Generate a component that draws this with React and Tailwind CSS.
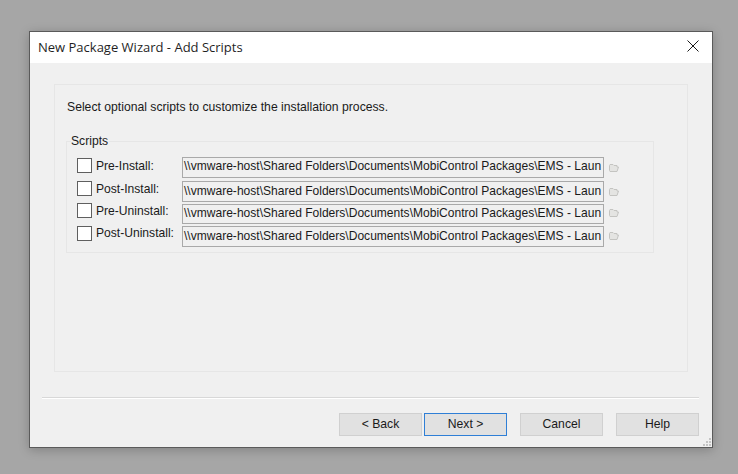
import React from 'react';

const PATH = '\\\\vmware-host\\Shared Folders\\Documents\\MobiControl Packages\\EMS - Laun';

const rows = [
    { label: 'Pre-Install:', rowClass: 'h-[21px] mb-[3px]', boxClass: 'mt-px', labelClass: 'mt-[2px]', iconClass: 'mt-[7px]', pathClass: 'leading-[16px]' },
    { label: 'Post-Install:', rowClass: 'h-[21px] mb-[2px]', boxClass: 'mt-0', labelClass: 'mt-px', iconClass: 'mt-[7px]', pathClass: 'leading-[18px]' },
    { label: 'Pre-Uninstall:', rowClass: 'h-[20px] mb-[2px]', boxClass: '-mt-px', labelClass: 'mt-0', iconClass: 'mt-[5px]', pathClass: 'leading-[16px]' },
    { label: 'Post-Uninstall:', rowClass: 'h-[21px]', boxClass: 'mt-0', labelClass: 'mt-0', iconClass: 'mt-[6px]', pathClass: 'leading-[18px]' },
];

const FolderIcon = ({ className }) => (
    <svg width="10" height="8" viewBox="0 0 10 8" className={`ml-[5px] shrink-0 ${className}`}>
        <path d="M0.5 1.5 L1 0.5 H4 L5 1.5 H8 V3 H9.5 L8 7.5 H1 L0.5 6.5 Z" fill="#e4e4e2" stroke="#c4c4c1" strokeWidth="1" />
    </svg>
);

const WizardButton = ({ children, focused, className = '' }) => (
    <button className={`h-[23px] w-[83px] bg-[#e1e1e1] text-[12.2px] text-[#1a1a1a] ${focused ? 'border border-[#2f7fd6]' : 'border border-[#d0d0d0]'} ${className}`}>
        {children}
    </button>
);

const App = () => {
    return (
        <div className="h-[474px] w-[738px] overflow-hidden bg-[#a6a6a6] pl-[29px] pt-[31px] font-['Liberation_Sans',Arial,sans-serif]">
            <div className="relative flex h-[417px] w-[684px] flex-col border border-[#5a5a5a] bg-[#f0f0f0] shadow-[0_2px_10px_rgba(0,0,0,0.22)]">
                <div className="flex h-[31px] items-center justify-between bg-white pl-2 pr-[13px]">
                    <span className="font-['Open_Sans',sans-serif] text-[13px] text-[#1f1f1f]">New Package Wizard - Add Scripts</span>
                    <svg width="12" height="12" viewBox="0 0 12 12" className="mb-[3px]">
                        <path d="M0.5 0.5 L11.5 11.5 M11.5 0.5 L0.5 11.5" stroke="#1a1a1a" strokeWidth="1" fill="none" />
                    </svg>
                </div>

                <div className="ml-[24px] mt-[21px] h-[288px] w-[634px] border border-[#e6e6e6] pl-[12px] pt-[15px]">
                    <p className="text-[12.2px] leading-[15px] text-[#1a1a1a]">Select optional scripts to customize the installation process.</p>

                    <div className="relative ml-[-1px] mt-[26px] h-[112px] w-[588px] border border-[#e6e6e6] pl-[10px] pt-[15px]">
                        <span className="absolute left-[4px] top-[-8px] bg-[#f0f0f0] pr-px text-[12.15px] leading-[15px] text-[#1a1a1a]">Scripts</span>
                        {rows.map((row) => (
                            <div key={row.label} className={`flex ${row.rowClass}`}>
                                <div className={`h-[15px] w-[15px] shrink-0 border border-[#5f5f5f] bg-white ${row.boxClass}`} />
                                <span className={`ml-[4px] w-[86px] shrink-0 text-[12.1px] leading-[15px] text-[#1a1a1a] ${row.labelClass}`}>{row.label}</span>
                                <div className={`h-full w-[422px] shrink-0 whitespace-nowrap border border-[#a9a9a9] bg-[#f0f0f0] pl-px text-[12.06px] text-[#1a1a1a] ${row.pathClass}`}>{PATH}</div>
                                <FolderIcon className={row.iconClass} />
                            </div>
                        ))}
                    </div>
                </div>

                <div className="ml-[12px] mt-[25px] h-[2px] w-[657px] border-t border-b border-t-[#d8d8d8] border-b-white" />

                <div className="mr-[13px] mt-[14px] flex justify-end">
                    <WizardButton>&lt; Back</WizardButton>
                    <WizardButton focused className="ml-[2px]">Next &gt;</WizardButton>
                    <WizardButton className="ml-[13px]">Cancel</WizardButton>
                    <WizardButton className="ml-[13px]">Help</WizardButton>
                </div>

                <svg width="9" height="9" viewBox="0 0 9 9" className="absolute bottom-px right-px">
                    <path d="M7 1h2v2H7z M4 4h2v2H4z M7 4h2v2H7z M1 7h2v2H1z M4 7h2v2H4z M7 7h2v2H7z" fill="#c4c4c4" />
                </svg>
            </div>
        </div>
    );
};

export default App;
